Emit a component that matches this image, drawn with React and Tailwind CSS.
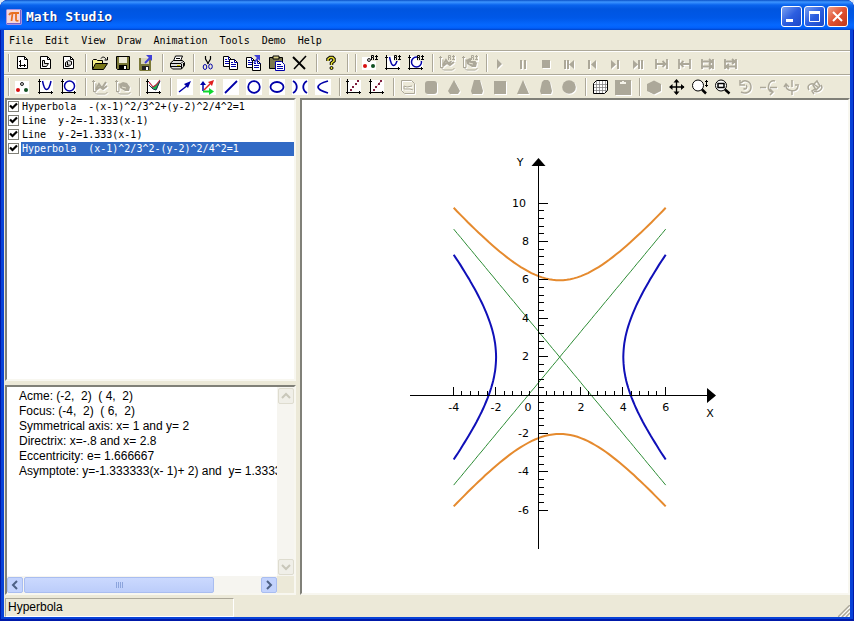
import React, { useState } from 'react';

const MENUS = ['File', 'Edit', 'View', 'Draw', 'Animation', 'Tools', 'Demo', 'Help'];

const OBJECTS = [
  { id: 1, label: 'Hyperbola  -(x-1)^2/3^2+(y-2)^2/4^2=1' },
  { id: 2, label: 'Line  y-2=-1.333(x-1)' },
  { id: 3, label: 'Line  y-2=1.333(x-1)' },
  { id: 4, label: 'Hyperbola  (x-1)^2/3^2-(y-2)^2/4^2=1' }
];

const DETAILS = [
  'Acme: (-2,  2)  ( 4,  2)',
  'Focus: (-4,  2)  ( 6,  2)',
  'Symmetrical axis: x= 1 and y= 2',
  'Directrix: x=-.8 and x= 2.8',
  'Eccentricity: e= 1.666667',
  'Asymptote: y=-1.333333(x- 1)+ 2) and  y= 1.3333'
];

const GRAY = '#aca899';
const NAVY = '#0000a8';

/* ---------- icon parts ---------- */

const Page = ({ children }) => (
  <>
    <path d="M2.500 1.500h7l3 3v9h-10z" fill="#fff" stroke="#000" />
    <path d="M9.500 1.500v3h3" fill="none" stroke="#000" />
    {children}
  </>
);

const Axes = ({ color = '#000' }) => (
  <path d="M1.500 0v15M0 13.500h15M0 2.500h3M13.500 12v3" fill="none" stroke={color} />
);

// small "R" tag with an up arrow in the upper right corner of an icon
const Tag = ({ color = '#000' }) => (
  <path d="M9.500 5V.5h2v2h-2M11.500 3v2M14.500 0v5M13 1.500h3M13 4.500h3" fill="none" stroke={color} />
);

const Dots = () => (
  <>
    <path d="M0 2h14v13H0z" fill="#fff" />
    <circle cx="7" cy="5" r="1.500" fill="#ccc" stroke="#222" />
    <circle cx="3" cy="11" r="2" fill="#d81010" />
    <circle cx="11" cy="11" r="2" fill="#105020" />
  </>
);

const Curve = () => (
  <>
    <path d="M1 1h14v13H1z" fill="#fff" />
    <path d="M4.500 2c1 5 2 8.500 4 8.500s3.500-3.500 4.500-8.500" fill="none" stroke={NAVY} strokeWidth="1.500" />
    <Axes />
  </>
);

const Ring = () => (
  <>
    <path d="M1 1h14v13H1z" fill="#fff" />
    <circle cx="8.500" cy="7" r="5" fill="none" stroke={NAVY} strokeWidth="1.500" />
    <Axes />
  </>
);

const GrayCurve = () => (
  <>
    <path d="M1.500 1v11l3 3h9l2-2M1 12.500h3v-8M0 2.500h3" fill="none" stroke={GRAY} />
    <path d="M4 10l3-5 3 4 4-6M4 11l4-3 3 2 4-3" fill="none" stroke={GRAY} strokeWidth="2" />
  </>
);

const GrayRing = () => (
  <>
    <path d="M1.500 1v11l3 3h9l2-2M1 12.500h3v-8M0 2.500h3" fill="none" stroke={GRAY} />
    <path d="M4 5l4-2 4 1 3 4-1 4h-4L5 9z" fill={GRAY} />
    <path d="M7 8l4 1" stroke="#ece9d8" />
  </>
);

const Scatter = ({ children }) => (
  <>
    <path d="M2 1h13v12H2z" fill="#fff" />
    <Axes />
    <path d="M4 10h2v2H4zM6 7h2v2H6zM9 4h2v2H9zM11 1h2v2h-2z" fill="#802040" />
    {children}
  </>
);

const Doc = ({ x, y }) => (
  <g transform={`translate(${x} ${y})`}>
    <path d="M.5.5h5l3 3v7h-8z" fill="#fff" stroke="#000" />
    <path d="M5.500.5v3h3M2 3.500h2M2 5.500h5M2 7.500h5" fill="none" stroke={NAVY} />
  </g>
);

const Floppy = () => (
  <>
    <path d="M1.500 1.500h13v13h-12l-1-1z" fill="#7a7838" stroke="#000" />
    <path d="M4 2h8v6H4z" fill="#ece9d8" />
    <path d="M4 10h8v4H4z" fill="#000" />
    <path d="M9 11h2v3H9z" fill="#fff" />
  </>
);

const White = () => <path d="M0 0h16v16H0z" fill="#fff" />;

const ICONS = {
  newPlane: <Page><path d="M5.500 5v7M4 10.500h7M4 6.500h2M9.500 9v3" fill="none" stroke="#000" /></Page>,
  newSpace: <Page><path d="M4.500 5.500h2v3h4l-2 3h-4z" fill="#ddd" stroke="#000" /></Page>,
  newSolid: <Page><path d="M4.500 7.500l3-2 3 1v3l-3 2h-3z" fill="#ddd" stroke="#000" /><path d="M6.500 7v3h2" fill="none" stroke="#000" /></Page>,
  open: (
    <>
      <path d="M.5 14V5.500l1-1h3l1 1h5v3" fill="#f8f088" stroke="#000" />
      <path d="M.5 14.500l3-6h12l-4 6z" fill="#7a7818" stroke="#000" />
      <path d="M9 3.500c1-2 4-2 5 1M15.500 2v3h-3" fill="none" stroke="#000" />
    </>
  ),
  save: <Floppy />,
  saveAs: (
    <>
      <g transform="translate(0 2)">
        <path d="M1 1h12v13H2l-1-1z" fill="#7a7838" />
        <path d="M3 1h8v6H3z" fill="#d8d4b8" />
        <path d="M4 9h7v4H4z" fill="#222" />
        <path d="M8 10h2v3H8z" fill="#fff" />
      </g>
      <path d="M7 8l5-5" stroke="#4040d8" strokeWidth="2" />
      <path d="M8 0h6v6z" fill="#4040d8" />
    </>
  ),
  print: (
    <>
      <path d="M4.500 6l2-5h7l-2 5" fill="#fff" stroke="#000" />
      <path d="M1.500 8l3-2.500h9l2 2v3l-3 3.500h-9l-2-2z" fill="#ddd" stroke="#000" />
      <path d="M2 8.500h10l2-2M2 11.500h10M12.500 9v5M7 3.500h4M14.500 8v3" fill="none" stroke="#000" />
      <path d="M8 10h3v1H8z" fill="#c8c000" />
    </>
  ),
  cut: (
    <>
      <path d="M5.500 1v3l3 5M10.500 1v3l-3 5" fill="none" stroke="#000" strokeWidth="1.200" />
      <ellipse cx="5" cy="12" rx="1.800" ry="2.500" fill="none" stroke={NAVY} />
      <ellipse cx="10.500" cy="11.500" rx="1.800" ry="2.500" fill="none" stroke={NAVY} />
    </>
  ),
  copy: <><Doc x={0} y={1} /><Doc x={6} y={4} /></>,
  copyTo: (
    <>
      <Doc x={0} y={2} />
      <Doc x={6} y={5} />
      <path d="M8 8l4-5" stroke="#4040d8" strokeWidth="2" />
      <path d="M8 0h6v6z" fill="#4040d8" />
    </>
  ),
  paste: (
    <>
      <path d="M.5 2.500h13v11H.5z" fill="#7a7850" stroke="#000" />
      <path d="M4 1h6v3H4z" fill="#d8d088" stroke="#000" />
      <path d="M6.500 6.500h6l3 3v6h-9z" fill="#fff" stroke={NAVY} />
      <path d="M8 9.500h4M8 11.500h6M8 13.500h6" stroke={NAVY} />
    </>
  ),
  remove: (
    <>
      <path d="M1 2l12 12" stroke="#000" strokeWidth="2" />
      <path d="M14 1L2 14" stroke="#000" strokeWidth="1.500" />
    </>
  ),
  help: (
    <>
      <path d="M5 6V4l2-1.500h2.500L11 4v2L8.500 8v2" fill="none" stroke="#000" strokeWidth="3.500" />
      <path d="M5 6V4l2-1.500h2.500L11 4v2L8.500 8v2" fill="none" stroke="#e8e030" strokeWidth="1.500" />
      <circle cx="8.500" cy="13" r="1.500" fill="#e8e030" stroke="#000" />
    </>
  ),
  dots: <Dots />,
  curve: <Curve />,
  ring: <Ring />,
  dotsTag: <><Dots /><path d="M9 0h7v6H9z" fill="#ece9d8" /><Tag /></>,
  curveTag: <><Curve /><path d="M9 0h7v6H9z" fill="#ece9d8" /><Tag /></>,
  ringTag: <><Ring /><path d="M9 0h7v6H9z" fill="#ece9d8" /><Tag /></>,
  grayCurve: <GrayCurve />,
  grayRing: <GrayRing />,
  grayCurveTag: <><GrayCurve /><path d="M9 0h7v6H9z" fill="#ece9d8" /><Tag color={GRAY} /></>,
  grayRingTag: <><GrayRing /><path d="M9 0h7v6H9z" fill="#ece9d8" /><Tag color={GRAY} /></>,
  play: <path d="M4 4l5 5-5 5z" fill={GRAY} />,
  pause: <path d="M4 5h2v9H4zM8 5h2v9H8z" fill={GRAY} />,
  stop: <path d="M3 5h8v8H3z" fill={GRAY} />,
  first: <path d="M2 5h2v9H2zM5 5h2v9H5zM12 5v9L7 9.500z" fill={GRAY} />,
  stepBack: <path d="M3 5h2v9H3zM11 5v9L6 9.500z" fill={GRAY} />,
  stepNext: <path d="M3 5l5 4.500L3 14zM9 5h2v9H9z" fill={GRAY} />,
  last: <path d="M2 5l5 4.500L2 14zM7 5h2v9H7zM10 5h2v9h-2z" fill={GRAY} />,
  span: <path d="M2 4v10M13 4v10M2 9h10M8.500 6l3 3-3 3" fill="none" stroke={GRAY} strokeWidth="1.800" />,
  spanBack: <path d="M2 4v10M13 4v10M3 9h10M6.500 6l-3 3 3 3" fill="none" stroke={GRAY} strokeWidth="1.800" />,
  loop: <path d="M2 4v10M13 4v10M1 6.500h11M1 11.500h11M9 4l3 2.500L9 9M9 9l3 2.500L9 14" fill="none" stroke={GRAY} strokeWidth="1.800" />,
  loopBoth: <path d="M2 4v10M13 4v10M1 6.500h11M3 11.500h10M9 4l3 2.500L9 9M6 9l-3 2.500L6 14" fill="none" stroke={GRAY} strokeWidth="1.800" />,
  region: (
    <>
      <path d="M1 1h14v13H1z" fill="#fff" />
      <path d="M5 8l3-1 6-5-3 8-2 1z" fill="#18b850" />
      <path d="M3 3l4 5 3-2 4-5" fill="none" stroke="#c02040" strokeWidth="1.200" />
      <path d="M3 6l4 4 3 1 4-9" fill="none" stroke="#203050" />
      <Axes />
    </>
  ),
  vector: <><White /><path d="M2 13l9-7" stroke={NAVY} strokeWidth="1.500" /><path d="M14 2l-3 7-4-4z" fill={NAVY} /></>,
  vectors: (
    <>
      <White />
      <path d="M3 12V4" stroke={NAVY} strokeWidth="1.500" />
      <path d="M0 6l3-4 3 4z" fill={NAVY} />
      <path d="M4 11l6-6" stroke="#e02020" strokeWidth="1.500" />
      <path d="M14 1l-2 6-4-4z" fill="#e02020" />
      <path d="M3 12.500h7" stroke="#10d830" strokeWidth="2" />
      <path d="M9 9l5 3.500L9 16z" fill="#10d830" />
    </>
  ),
  line: <><White /><path d="M2 14L14 2" stroke={NAVY} strokeWidth="1.800" /></>,
  circle: <><White /><circle cx="8" cy="8" r="5.800" fill="none" stroke={NAVY} strokeWidth="1.800" /></>,
  ellipse: <><White /><ellipse cx="8" cy="8" rx="6.500" ry="5" fill="none" stroke={NAVY} strokeWidth="1.800" /></>,
  hyperbola: <><White /><path d="M1 2c5 3 5 9 0 12M15 2c-5 3-5 9 0 12" fill="none" stroke={NAVY} strokeWidth="1.800" /></>,
  parabola: <><White /><path d="M13 2C6 4 3 6 3 8s3 4 10 6" fill="none" stroke={NAVY} strokeWidth="1.800" /></>,
  scatter: <Scatter />,
  scatterFit: <Scatter><path d="M5 11l7-9" stroke="#802040" strokeDasharray="1 2" /></Scatter>,
  plane: <path d="M1.500 1.500h10l3 3v10h-10l-3-3zM4 7l3 1 5-1M4 7v3h6l3 1" fill="none" stroke={GRAY} />,
  cylinder: <rect x="2" y="2" width="12" height="13" rx="3" fill={GRAY} />,
  cone: <path d="M8 1l6 11-2 3H4l-2-3z" fill={GRAY} />,
  frustum: <path d="M5 1h6l3 11-1 3H3l-1-3z" fill={GRAY} />,
  box: <path d="M2 2h12v13H2z" fill={GRAY} />,
  pyramid: <path d="M8 1l6 14H2z" fill={GRAY} />,
  prism: <path d="M4 3l2-2h4l2 2 2 9-1 3H3l-1-3z" fill={GRAY} />,
  ball: <circle cx="8" cy="8" r="6.800" fill={GRAY} />,
  grid: (
    <>
      <path d="M1.500 4.500l3-3h11v10l-3 3h-11z" fill="#fff" stroke="#000" />
      <path d="M4.500 2v12M7.500 2v12M10.500 2v12M13.500 2v11M2 5.500h13M2 8.500h13M2 11.500h13" stroke="#777" strokeOpacity=".7" />
    </>
  ),
  board: <><path d="M0 1h16v15H0z" fill={GRAY} /><path d="M5 3h2V2h2v1h2v2H5z" fill="#f4f2e8" /></>,
  hexagon: <path d="M8 1.500l7 3.500v7l-7 3.500L1 12V5z" fill={GRAY} />,
  move: (
    <>
      <path d="M7.500 1v14M1 8h14" stroke="#000" strokeWidth="1.300" />
      <path d="M7.500 0l3 3.500h-6zM7.500 16l3-3.500h-6zM0 8l3.500-3v6zM15.500 8L12 5v6z" fill="#000" />
    </>
  ),
  zoom: (
    <>
      <circle cx="6" cy="6.500" r="5.500" fill="#fff" stroke="#000" />
      <path d="M10 10.500l4 4" stroke="#000" strokeWidth="2.500" />
      <path d="M14.500 1v7M13 2.500h3M13 6.500h3" stroke="#000" />
    </>
  ),
  zoomBox: (
    <>
      <circle cx="6" cy="6.500" r="5.500" fill="#fff" stroke="#000" />
      <path d="M3 4.500h6v4H3z" fill="none" stroke="#000" strokeWidth="1.500" />
      <path d="M10 10.500l4.500 4" stroke="#000" strokeWidth="2.500" />
    </>
  ),
  rotate: (
    <>
      <path d="M3 4c3-4 10-2 10 4s-6 7-10 5M2 1v5h5" fill="none" stroke={GRAY} strokeWidth="1.500" />
      <path d="M5.500 9.500C8 11 10 8 8 6" fill="none" stroke={GRAY} strokeWidth="1.500" />
    </>
  ),
  rotateX: <path d="M-1 8.500h6M9 8.500h7M14 2C7 0 5 12 11 13M9 10l3 3-3 3" fill="none" stroke={GRAY} strokeWidth="1.500" />,
  rotateY: <path d="M8 1v7M8 11v5M2 6c-1 7 12 8 12 1M0 8l2-3 3 3M11 6h4" fill="none" stroke={GRAY} strokeWidth="1.500" />,
  rotateZ: (
    <>
      <path d="M2 11C-1 6 5 3 8 6l4 3M14 6c3 4-3 8-7 6M7 15l-2-3 3-2" fill="none" stroke={GRAY} strokeWidth="1.500" />
      <path d="M6 6l4-4 3 5-4 4z" fill="none" stroke={GRAY} strokeWidth="1.500" />
    </>
  )
};

const BAR_ONE = [
  ['newPlane', 'newSpace', 'newSolid'],
  ['open', 'save', 'saveAs'],
  ['print'],
  ['cut', 'copy', 'copyTo', 'paste', 'remove'],
  ['help'],
  [],
  ['dotsTag', 'curveTag', 'ringTag'],
  ['grayCurveTag', 'grayRingTag'],
  ['play', 'pause', 'stop', 'first', 'stepBack', 'stepNext', 'last', 'span', 'spanBack', 'loop', 'loopBoth']
];

const BAR_TWO = [
  ['dots', 'curve', 'ring'],
  ['grayCurve', 'grayRing'],
  ['region'],
  ['vector', 'vectors', 'line', 'circle', 'ellipse', 'hyperbola', 'parabola'],
  ['scatter', 'scatterFit'],
  ['plane', 'cylinder', 'cone', 'frustum', 'box', 'pyramid', 'prism', 'ball'],
  ['grid', 'board'],
  ['hexagon', 'move', 'zoom', 'zoomBox', 'rotate', 'rotateX', 'rotateY', 'rotateZ']
];

const DISABLED = [
  'grayCurveTag', 'grayRingTag', 'play', 'pause', 'stop', 'first', 'stepBack', 'stepNext', 'last',
  'span', 'spanBack', 'loop', 'loopBoth', 'grayCurve', 'grayRing', 'plane', 'cylinder', 'cone',
  'frustum', 'box', 'pyramid', 'prism', 'ball', 'board', 'hexagon', 'rotate', 'rotateX', 'rotateY', 'rotateZ'
];

const Toolbar = ({ groups, label }) => (
  <div
    role="toolbar"
    aria-label={label}
    className="flex items-center overflow-hidden h-6 shrink-0 border-t border-[#aca899] shadow-[inset_0_1px_0_#fff] pt-px"
  >
    {groups.map((group, i) => (
      <div key={i} className="flex items-center shrink-0">
        <div className="w-2 pl-1">
          <div className="w-[2px] h-[18px] border-l border-[#aca899] bg-white"></div>
        </div>
        {group.map((name) => {
          const disabled = DISABLED.includes(name);
          return (
            <button
              key={name}
              type="button"
              aria-label={name}
              disabled={disabled}
              className={`w-[23px] h-[22px] pl-[3px] flex items-center ${disabled ? '[filter:drop-shadow(1px_1px_0_#fff)]' : ''}`}
            >
              <svg viewBox="0 0 16 16" className="w-4 h-4 overflow-visible">{ICONS[name]}</svg>
            </button>
          );
        })}
      </div>
    ))}
  </div>
);

/* ---------- plot ---------- */

const X0 = 136.5;
const Y0 = 245.5;
const px = (x) => X0 + x * 21.2;
const py = (y) => Y0 - y * 19.2;

const trace = (from, to, point) => {
  const pts = [];
  for (let i = 0; i <= 60; i++) {
    const [x, y] = point(from + ((to - from) * i) / 60);
    pts.push(`${px(x).toFixed(1)},${py(y).toFixed(1)}`);
  }
  return pts.join(' ');
};

const range = (from, to) => {
  const out = [];
  for (let i = from; i <= to; i++) out.push(i);
  return out;
};

const Plot = () => {
  const reach = 16 / 3;
  return (
    <svg viewBox="0 0 320 404" className="w-[320px] h-[404px] block shrink-0" role="img" aria-label="Plot">
      <g fill="none" stroke="#e58a2e" strokeWidth="2">
        <polyline points={trace(-4, 6, (x) => [x, 2 + 4 * Math.sqrt(1 + (x - 1) ** 2 / 9)])} />
        <polyline points={trace(-4, 6, (x) => [x, 2 - 4 * Math.sqrt(1 + (x - 1) ** 2 / 9)])} />
      </g>
      <g fill="none" stroke="#2c8c34" strokeWidth="1">
        <polyline points={trace(-4, 6, (x) => [x, 2 + (4 / 3) * (x - 1)])} />
        <polyline points={trace(-4, 6, (x) => [x, 2 - (4 / 3) * (x - 1)])} />
      </g>
      <g fill="none" stroke="#1010b8" strokeWidth="2">
        <polyline points={trace(2 - reach, 2 + reach, (y) => [1 + 3 * Math.sqrt(1 + (y - 2) ** 2 / 16), y])} />
        <polyline points={trace(2 - reach, 2 + reach, (y) => [1 - 3 * Math.sqrt(1 + (y - 2) ** 2 / 16), y])} />
      </g>

      {/* Axes and ticks, five steps to each label */}
      <g stroke="#000" shapeRendering="crispEdges">
        <path d={`M8 ${Y0}H306M${X0} 14V399`} />
        {range(-10, 15).map((i) => (
          <path key={`x${i}`} d={`M${Math.round(px(i * 0.4)) - 0.5} ${Y0}v${i % 5 === 0 ? -9 : -5}`} />
        ))}
        {range(-15, 25).map((i) => (
          <path key={`y${i}`} d={`M${X0} ${Math.round(py(i * 0.4)) - 0.5}h${i % 5 === 0 ? 9 : 5}`} />
        ))}
      </g>
      <path d="M136.500 8l7 8h-14zM305 238l9 7.500-9 7.500z" />

      <g className="text-[11px]" fontFamily='"DejaVu Sans", sans-serif'>
        {[-4, -2, 2, 4, 6].map((n) => (
          <text key={n} x={px(n)} y={261} textAnchor="middle">{n}</text>
        ))}
        {[-6, -4, -2, 2, 4, 6, 8, 10].map((n) => (
          <text key={n} x={n > 9 ? 124 : 127} y={Math.round(py(n)) + 3} textAnchor="end">{n}</text>
        ))}
        <text x={126} y={261} textAnchor="middle">0</text>
        <text x={118} y={16} textAnchor="middle">Y</text>
        <text x={308} y={267} textAnchor="middle">X</text>
      </g>
    </svg>
  );
};

/* ---------- window ---------- */

const CaptionButton = ({ label, className, children }) => (
  <button
    type="button"
    aria-label={label}
    className={`w-[21px] h-[21px] rounded-[3px] border border-white flex items-center justify-center ${className}`}
  >
    <svg viewBox="0 0 19 19" className="w-[19px] h-[19px]" fill="none" stroke="#fff">{children}</svg>
  </button>
);

const ScrollButton = ({ label, disabled, d }) => (
  <button
    type="button"
    aria-label={label}
    disabled={disabled}
    className={`w-4 h-4 rounded-[2px] border shrink-0 flex items-center justify-center ${
      disabled ? 'bg-[#f0efe8] border-[#dedccf]' : 'bg-[#c3d3fd] border-[#a9bdf0]'
    }`}
  >
    <svg viewBox="0 0 10 10" className="w-[10px] h-[10px]" fill="none" stroke={disabled ? '#c9c7ba' : '#4d6185'} strokeWidth="2">
      <path d={d} />
    </svg>
  </button>
);

const App = () => {
  const [selected, setSelected] = useState(4);
  const [visible, setVisible] = useState([1, 2, 3, 4]);

  const toggle = (id) => {
    setVisible(visible.includes(id) ? visible.filter((v) => v !== id) : [...visible, id]);
  };

  return (
    <div className="min-h-screen bg-[#dce8f8] text-black flex">
      <div className="flex-1 min-w-0 flex flex-col rounded-t-lg overflow-hidden bg-[#0842d8] shadow-[inset_1px_0_0_#0019a8,inset_-1px_0_0_#0019a8,inset_0_-2px_0_#0019a8] px-1 pb-1">
        {/* Title bar */}
        <header className="h-[30px] shrink-0 -mx-1 px-[6px] pt-[3px] flex items-center bg-[linear-gradient(#0a50c8_0px,#3d95ff_2px,#0a64ee_5px,#0055e0_9px,#0058e8_18px,#0568ff_25px,#0260fa_28px,#0043c8_30px)]">
          <svg viewBox="0 0 16 16" className="w-4 h-4 mr-1">
            <rect x=".5" y=".5" width="15" height="15" rx="1" fill="#f4d8dc" stroke="#a890e0" />
            <path d="M1 14.500h14M14.500 1v14" stroke="#7860c8" />
            <path d="M3 6c1-2 2-2 3-2h7M6.500 4.500L5.500 12M10 4.500v6c0 1.500 1 1.500 2.500 1" fill="none" stroke="#e87020" strokeWidth="1.800" />
          </svg>
          <h1 className="flex-1 font-['DejaVu_Sans_Mono',monospace] font-bold text-[13px] leading-4 text-white [text-shadow:1px_1px_0_#0a2c80]">
            Math Studio
          </h1>
          <div className="flex gap-[2px]">
            <CaptionButton label="Minimize" className="bg-[linear-gradient(135deg,#7aa0f0,#2c5ee0_50%,#1c48c8)]">
              <path d="M4 13.500h7" strokeWidth="3" />
            </CaptionButton>
            <CaptionButton label="Maximize" className="bg-[linear-gradient(135deg,#7aa0f0,#2c5ee0_50%,#1c48c8)]">
              <path d="M4.500 5v9.500h10V5" />
              <path d="M4 5.500h11" strokeWidth="3" />
            </CaptionButton>
            <CaptionButton label="Close" className="bg-[linear-gradient(135deg,#f0a088,#e05030_50%,#c03818)]">
              <path d="M5 5l9 9M14 5l-9 9" strokeWidth="2" />
            </CaptionButton>
          </div>
        </header>

        <div className="flex-1 flex flex-col bg-[#ece9d8]">
          {/* Menu */}
          <nav className="h-5 shrink-0 flex items-end pb-[2px] gap-3 pl-[5px] font-['DejaVu_Sans_Mono',monospace] text-[10px] leading-[14px]">
            {MENUS.map((menu) => (
              <button key={menu} type="button">{menu}</button>
            ))}
          </nav>

          <Toolbar groups={BAR_ONE} label="Standard" />
          <Toolbar groups={BAR_TWO} label="Drawing" />

          <main className="flex-1 flex gap-1 pl-px pb-[2px]">
            <div className="w-[291px] shrink-0 flex flex-col gap-1">
              {/* Object list */}
              <ul className="flex-1 bg-white border-2 border-t-[#808078] border-l-[#808078] border-b-[#f8f7f0] border-r-[#f8f7f0] font-['DejaVu_Sans_Mono',monospace] text-[10px] leading-[14px]">
                {OBJECTS.map((item) => (
                  <li key={item.id} className="flex h-[14px]">
                    <label className="grid w-[14px] pl-px pt-px shrink-0 content-start">
                      <input
                        type="checkbox"
                        aria-label={item.label}
                        checked={visible.includes(item.id)}
                        onChange={() => toggle(item.id)}
                        className="peer appearance-none col-start-1 row-start-1 w-[11px] h-[11px] bg-white border border-[#808078]"
                      />
                      <svg viewBox="0 0 11 11" className="invisible peer-checked:visible pointer-events-none col-start-1 row-start-1 w-[11px] h-[11px]">
                        <path d="M2 4.500l2.500 2.500L9 2.500" fill="none" stroke="#000" strokeWidth="2.200" />
                      </svg>
                    </label>
                    <button
                      type="button"
                      onClick={() => setSelected(item.id)}
                      className={`flex-1 h-[14px] pl-px text-left whitespace-pre ${selected === item.id ? 'bg-[#316ac5] text-white' : ''}`}
                    >
                      {item.label}
                    </button>
                  </li>
                ))}
              </ul>

              {/* Properties of the selected object */}
              <div className="h-[210px] shrink-0 flex flex-col bg-white border-2 border-t-[#808078] border-l-[#808078] border-b-[#f8f7f0] border-r-[#f8f7f0]">
                <div className="flex-1 flex min-h-0">
                  <div className="flex-1 min-w-0 overflow-hidden pl-3 pt-[2px] whitespace-pre font-['Liberation_Sans',Arial,sans-serif] text-[12px] leading-[15px]">
                    {DETAILS.map((line) => (
                      <p key={line}>{line}</p>
                    ))}
                  </div>
                  <div className="w-[17px] flex flex-col justify-between items-center bg-[#f6f5f0] py-px">
                    <ScrollButton label="Scroll up" disabled d="M1 7l4-4 4 4" />
                    <ScrollButton label="Scroll down" disabled d="M1 3l4 4 4-4" />
                  </div>
                </div>
                <div className="h-[17px] flex">
                  <div className="flex-1 flex items-center bg-[#f6f5f0]">
                    <ScrollButton label="Scroll left" d="M7 1L3 5l4 4" />
                    <div className="flex-1 px-px">
                      <div className="w-[190px] h-4 rounded-[2px] border border-[#a9bdf0] bg-[linear-gradient(#cbd9fe,#bccdfa)] flex items-center justify-center gap-px">
                        {range(1, 4).map((i) => (
                          <span key={i} className="w-px h-[6px] bg-[#8ca4dc]"></span>
                        ))}
                      </div>
                    </div>
                    <ScrollButton label="Scroll right" d="M3 1l4 4-4 4" />
                  </div>
                  <div className="w-[17px] bg-[#ece9d8]"></div>
                </div>
              </div>
            </div>

            {/* Drawing area */}
            <section className="flex-1 min-w-0 overflow-hidden bg-white border-2 border-t-[#808078] border-l-[#808078] border-b-[#f8f7f0] border-r-[#f8f7f0] pl-[100px] pt-[50px]">
              <Plot />
            </section>
          </main>

          {/* Status bar */}
          <footer className="h-5 shrink-0 flex justify-between items-end pl-px">
            <div className="w-[229px] h-[19px] pl-[2px] border border-t-[#aca899] border-l-[#aca899] border-b-white border-r-white font-['Liberation_Sans',Arial,sans-serif] text-[12px] leading-[17px]">
              Hyperbola
            </div>
            <svg viewBox="0 0 12 12" className="w-3 h-3">
              <path d="M1 12L12 1M5 12l7-7M9 12l3-3" stroke="#fff" strokeWidth="2" />
              <path d="M0 12L12 0M4 12l8-8M8 12l4-4" stroke="#aca899" strokeWidth="1.500" />
            </svg>
          </footer>
        </div>
      </div>
    </div>
  );
};

export default App;
